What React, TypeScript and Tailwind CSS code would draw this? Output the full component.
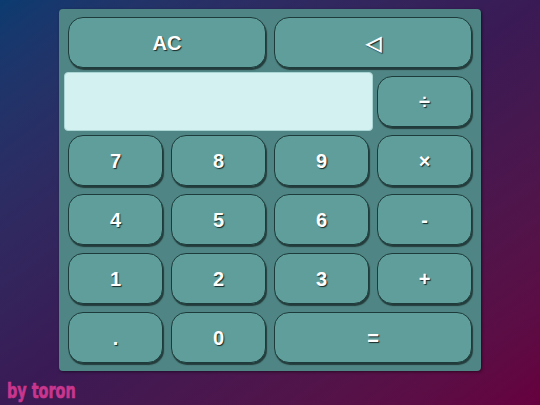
const keys: { label: string; span?: boolean }[] = [
  { label: "7" },
  { label: "8" },
  { label: "9" },
  { label: "×" },
  { label: "4" },
  { label: "5" },
  { label: "6" },
  { label: "-" },
  { label: "1" },
  { label: "2" },
  { label: "3" },
  { label: "+" },
  { label: "." },
  { label: "0" },
  { label: "=", span: true },
];

function Key({ label, span }: { label: string; span?: boolean }) {
  return (
    <button
      className={
        "m-1 flex items-center justify-center rounded-[15px] border border-[#1d3b3a] bg-[#5f9e9b] text-[20px] font-bold text-white shadow-[1px_2px_1px_rgba(0,0,0,0.55)] [text-shadow:1px_1px_1px_#1a2a2a] " +
        (span ? "col-span-2" : "")
      }
    >
      {label}
    </button>
  );
}

export default function App() {
  return (
    <main
      className="relative h-[405px] w-[540px] overflow-hidden bg-gradient-to-br from-[#0a3b70] via-[#3a1a55] to-[#66003f]"
      style={{ fontFamily: '"Liberation Sans", Arial, sans-serif' }}
    >
      <div className="ml-[59px] mt-[9px] w-[422px] rounded-[4px] bg-[#4f8584] px-[5px] py-[4px] shadow-[1px_1px_3px_rgba(0,0,0,0.5)]">
        <div className="grid grid-cols-4 grid-rows-[repeat(6,59px)]">
          <Key label="AC" span />
          <Key label="◁" span />
          <div className="rounded-[4px] border border-[#a9d6d4] bg-[#d4f1f1]" style={{ gridColumn: "span 3" }} />
          <Key label="÷" />
          {keys.map((k) => (
            <Key key={k.label} label={k.label} span={k.span} />
          ))}
        </div>
      </div>
      <div
        className="absolute left-[7px] top-[379px] text-[20px] font-bold leading-none text-[#c8368e] [-webkit-text-stroke:0.6px_#c8368e]"
        style={{
          fontFamily: '"DejaVu Sans Condensed", "DejaVu Sans", sans-serif',
          transform: "scale(0.8, 1.1)",
          transformOrigin: "left top",
        }}
      >
        by toron
      </div>
    </main>
  );
}
